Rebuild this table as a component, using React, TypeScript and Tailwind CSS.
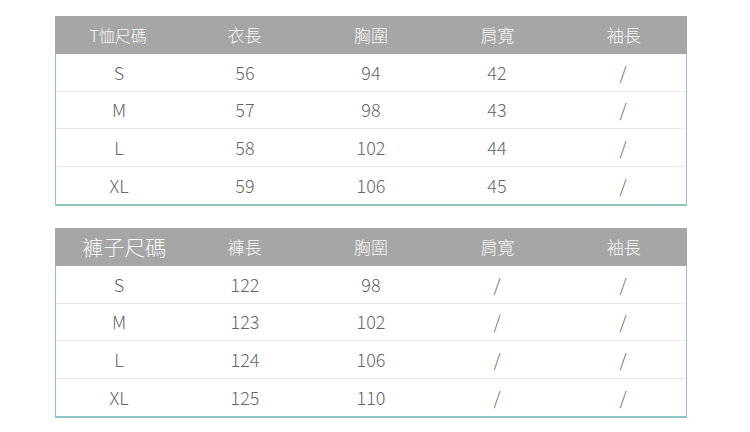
const font = { fontFamily: '"Noto Sans CJK TC", "Noto Sans", sans-serif' };

interface SizeTableProps {
  title: string;
  titleClass: string;
  headers: string[];
  rows: string[][];
}

function SizeTable({ title, titleClass, headers, rows }: SizeTableProps) {
  return (
    <div className="w-[632px]">
      <div className="grid h-[38px] grid-cols-5 items-center bg-[#a6a6a6] text-[#f6f6f6] font-light">
        <div className={`text-center ${titleClass}`}>{title}</div>
        {headers.map((h) => (
          <div key={h} className="text-center text-[17px]">
            {h}
          </div>
        ))}
      </div>
      <div className="border-x border-b-2 border-[#8fc6c3]">
        {rows.map((r, i) => (
          <div
            key={i}
            className={`grid h-[37.5px] grid-cols-5 items-center text-[18px] font-light text-[#666666] ${
              i < rows.length - 1 ? 'border-b border-[#e8e8e8]' : ''
            }`}
          >
            {r.map((c, j) => (
              <div key={j} className="text-center">
                {c}
              </div>
            ))}
          </div>
        ))}
      </div>
    </div>
  );
}

export default function App() {
  return (
    <div className="flex h-[432px] w-[750px] flex-col gap-[22px] bg-white pl-[55px] pt-4" style={font}>
      <SizeTable
        title="T恤尺碼"
        titleClass="text-[16px]"
        headers={['衣長', '胸圍', '肩寬', '袖長']}
        rows={[
          ['S', '56', '94', '42', '/'],
          ['M', '57', '98', '43', '/'],
          ['L', '58', '102', '44', '/'],
          ['XL', '59', '106', '45', '/'],
        ]}
      />
      <SizeTable
        title="褲子尺碼"
        titleClass="text-[21px] pl-[12px]"
        headers={['褲長', '胸圍', '肩寬', '袖長']}
        rows={[
          ['S', '122', '98', '/', '/'],
          ['M', '123', '102', '/', '/'],
          ['L', '124', '106', '/', '/'],
          ['XL', '125', '110', '/', '/'],
        ]}
      />
    </div>
  );
}
